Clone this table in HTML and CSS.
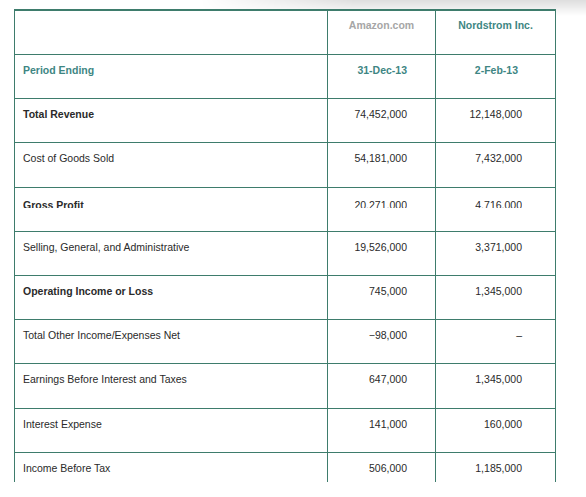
FILE: index.html
```html
<!DOCTYPE html>
<html>
<head>
<meta charset="utf-8">
<link rel="stylesheet" href="styles.css">
</head>
<body>
<div class="page">
  <div class="shade"></div>
  <div class="sheet">
    <div class="grid">
      <div class="cell head"></div>
      <div class="cell head center gray">Amazon.com</div>
      <div class="cell head center teal last">Nordstrom Inc.</div>

      <div class="cell label teal bold">Period Ending</div>
      <div class="cell num teal bold">31-Dec-13</div>
      <div class="cell num2 teal bold last date2">2-Feb-13</div>

      <div class="cell label bold">Total Revenue</div>
      <div class="cell num">74,452,000</div>
      <div class="cell num2 last">12,148,000</div>

      <div class="cell label">Cost of Goods Sold</div>
      <div class="cell num">54,181,000</div>
      <div class="cell num2 last">7,432,000</div>

      <div class="cell label bold"><span class="clip">Gross Profit</span></div>
      <div class="cell num"><span class="clip">20,271,000</span></div>
      <div class="cell num2 last"><span class="clip">4,716,000</span></div>

      <div class="cell label">Selling, General, and Administrative</div>
      <div class="cell num">19,526,000</div>
      <div class="cell num2 last">3,371,000</div>

      <div class="cell label bold">Operating Income or Loss</div>
      <div class="cell num">745,000</div>
      <div class="cell num2 last">1,345,000</div>

      <div class="cell label">Total Other Income/Expenses Net</div>
      <div class="cell num">&minus;98,000</div>
      <div class="cell num2 last">&ndash;</div>

      <div class="cell label">Earnings Before Interest and Taxes</div>
      <div class="cell num">647,000</div>
      <div class="cell num2 last">1,345,000</div>

      <div class="cell label">Interest Expense</div>
      <div class="cell num">141,000</div>
      <div class="cell num2 last">160,000</div>

      <div class="cell label">Income Before Tax</div>
      <div class="cell num">506,000</div>
      <div class="cell num2 last">1,185,000</div>
    </div>
  </div>
</div>
</body>
</html>
```

FILE: styles.css
```css
html, body {
  margin: 0;
  padding: 0;
  background: #ffffff;
}
body {
  width: 586px;
  height: 497px;
  overflow: hidden;
  font-family: "Liberation Sans", Arial, sans-serif;
  font-size: 10.5px;
  color: #2a2a2a;
}
.page {
  position: relative;
  width: 586px;
  height: 497px;
  padding-top: 9px;
  box-sizing: border-box;
}
.shade {
  position: absolute;
  top: 0;
  left: 200px;
  right: 0;
  height: 16px;
  background: linear-gradient(to bottom, rgba(0,0,0,0.13), rgba(0,0,0,0));
  -webkit-mask-image: linear-gradient(to right, transparent 0, #000 40%);
  mask-image: linear-gradient(to right, transparent 0, #000 40%);
}
.sheet {
  position: relative;
  margin-left: 14px;
  width: 542px;
  height: 473px;
  overflow: hidden;
  background: #fff;
  border-top: 2px solid #3e7c6c;
  border-left: 1px solid #3e7c6c;
  border-right: 1px solid #3e7c6c;
  box-sizing: border-box;
}
.grid {
  display: grid;
  grid-template-columns: 313px 108px 119px;
  grid-template-rows: 44px;
  grid-auto-rows: 44.2px;
}
.cell {
  box-sizing: border-box;
  border-bottom: 1px solid #3e7c6c;
  border-right: 1px solid #3e7c6c;
  padding-top: 9px;
  line-height: 12px;
  white-space: nowrap;
}
.cell.last {
  border-right: none;
}
.head {
  padding-top: 8px;
}
.label {
  padding-left: 8px;
}
.num {
  text-align: right;
  padding-right: 28px;
}
.num2 {
  text-align: right;
  padding-right: 33px;
}
.date2 {
  padding-right: 37px;
}
.center {
  text-align: center;
}
.bold {
  font-weight: bold;
}
.head.gray,
.head.teal {
  font-weight: bold;
}
.gray {
  color: #a6a6a6;
}
.teal {
  color: #3e8683;
}
.clip {
  display: inline-block;
  height: 9px;
  overflow: hidden;
  vertical-align: top;
  padding-top: 2px;
  line-height: 12px;
}
```
